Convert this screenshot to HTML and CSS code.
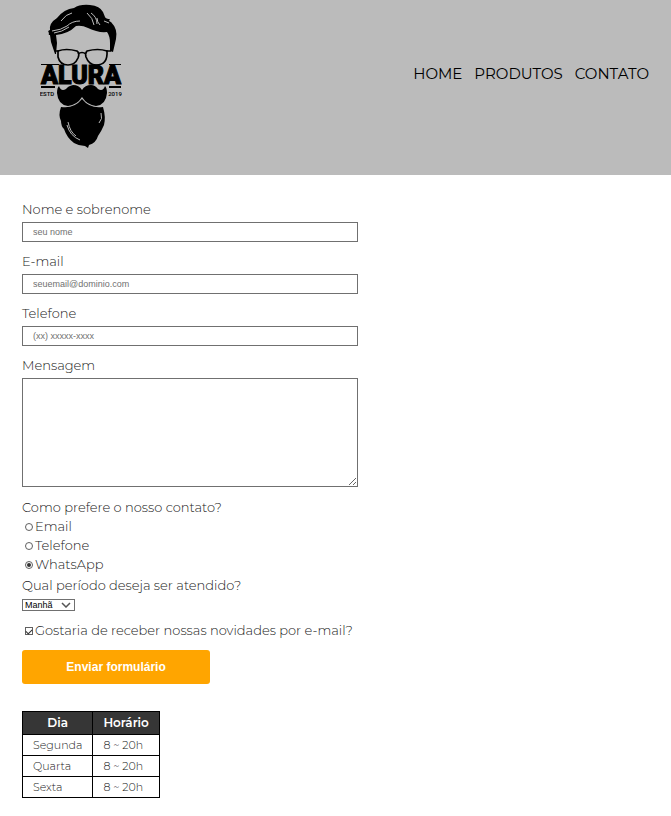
FILE: index.html
```html
<!DOCTYPE html>
<html lang="pt-br">
<head>
<meta charset="UTF-8">
<meta name="viewport" content="width=device-width, initial-scale=1">
<title>Contato - Barbearia Alura</title>
<link rel="stylesheet" href="styles.css">
</head>
<body>
<header class="header">
  <svg class="logo" viewBox="40 4 82 145" role="img" aria-label="Alura">
    <path d="M55 54L51 42L50 35Q48 35 49 33Q47 31 50 30Q49 23 57 18Q64 9 74 8Q80 4 90 5Q100 6 103 12L105 17Q106 19 110 19Q108 21 111 22Q118 29 116 39L113 52L110 51L110 43Q110 36 107 32Q98 33 88 28Q82 25 76 26Q68 34 56 35L57 43L56 54Z"/>
    <g class="shine">
      <path d="M52 31Q61 30 67 26Q72 21 80 21M54 33Q62 32 69 27M61 21Q66 14 72 13M87 13Q93 18 94 25M91 13Q97 17 97 24M97 18Q97 22 100 25M104 21L109 23"/>
    </g>
    <g class="frame">
      <path d="M58 51Q66 48 77 51Q80 53 78 58Q75 65 68 65Q60 65 58 57ZM87 51Q98 48 107 51Q108 65 96 65Q89 65 86 57Q85 53 87 51Z"/>
      <path d="M78 54Q82 51 86 54M56 51H59M106 51H111"/>
    </g>
    <path d="M41 64H59V65H41ZM109 64H121V65H109ZM41 86H55V88H41ZM109 86H121V88H109Z"/>
    <text class="brand" x="81" y="84">ALURA</text>
    <text class="small" x="47" y="96">ESTD</text>
    <text class="small" x="115" y="96">2019</text>
    <path d="M82 90Q79 85 73 85Q68 86 66 89Q61 92 59 86Q57 88 57 93Q58 105 68 106Q77 105 82 97Q87 105 96 106Q106 105 107 93Q107 88 105 86Q103 92 98 89Q95 85 91 85Q85 85 82 90Z"/>
    <path d="M61 107Q74 109 82 99Q90 109 103 107Q106 117 104 125Q101 132 98 136Q96 143 89 145L88 148L85 146Q79 146 74 143Q67 138 64 129Q61 126 61 121Q58 115 61 107Z"/>
    <g class="shine">
      <path d="M68 122Q70 132 76 136M67 125Q70 136 80 140M101 113Q103 119 99 123"/>
    </g>
  </svg>
  <nav class="nav">
    <a href="#">HOME</a>
    <a href="#">PRODUTOS</a>
    <a href="#">CONTATO</a>
  </nav>
</header>
<main class="main">
  <form class="form">
    <label class="label" for="nome">Nome e sobrenome</label>
    <input class="field" type="text" id="nome" placeholder="seu nome">
    <label class="label" for="email">E-mail</label>
    <input class="field" type="email" id="email" placeholder="seuemail@dominio.com">
    <label class="label" for="telefone">Telefone</label>
    <input class="field" type="tel" id="telefone" placeholder="(xx) xxxxx-xxxx">
    <label class="label" for="mensagem">Mensagem</label>
    <textarea class="field message" id="mensagem"></textarea>
    <fieldset class="group">
      <legend class="label">Como prefere o nosso contato?</legend>
      <label class="choice"><input type="radio" name="contato" value="email">Email</label>
      <label class="choice"><input type="radio" name="contato" value="telefone">Telefone</label>
      <label class="choice"><input type="radio" name="contato" value="whatsapp" checked>WhatsApp</label>
    </fieldset>
    <label class="label" for="periodo">Qual período deseja ser atendido?</label>
    <span class="period">
      <select id="periodo">
        <option>Manhã</option>
        <option>Tarde</option>
        <option>Noite</option>
      </select>
      <svg class="chevron" viewBox="0 0 10 6" aria-hidden="true"><path d="M1 1L5 5L9 1"/></svg>
    </span>
    <label class="choice news"><input type="checkbox" checked>Gostaria de receber nossas novidades por e-mail?</label>
    <button class="submit" type="submit">Enviar formulário</button>
  </form>
  <table class="hours">
    <thead>
      <tr><th>Dia</th><th>Horário</th></tr>
    </thead>
    <tbody>
      <tr><td>Segunda</td><td>8 ~ 20h</td></tr>
      <tr><td>Quarta</td><td>8 ~ 20h</td></tr>
      <tr><td>Sexta</td><td>8 ~ 20h</td></tr>
    </tbody>
  </table>
</main>
</body>
</html>
```
FILE: styles.css
```css
* {
  box-sizing: border-box;
}

body {
  margin: 0;
  background: #fff;
  color: #222;
  font-family: Montserrat, Inter, sans-serif;
  font-size: 13px;
  font-weight: 300;
  line-height: 20px;
}

.header {
  display: flex;
  justify-content: space-between;
  align-items: flex-start;
  padding: 4px 22px 26px 40px;
  background: #bbb;
}

.logo {
  display: block;
  width: 82px;
  height: 145px;
}

.shine path {
  fill: none;
  stroke: #bbb;
  stroke-width: 1;
}

.frame path {
  fill: none;
  stroke: #000;
  stroke-width: 1.7;
}

.brand {
  font: 900 25px Roboto, sans-serif;
  text-anchor: middle;
  stroke: #000;
  stroke-width: 1;
}

.small {
  font: 500 6px Roboto, sans-serif;
  text-anchor: middle;
}

.nav {
  display: flex;
  gap: 12px;
  padding-top: 60px;
  font-size: 15px;
  font-weight: 400;
}

.nav a {
  color: #000;
  text-decoration: none;
}

.main {
  padding: 24px 22px 18px;
}

.form {
  display: flex;
  flex-direction: column;
  align-items: flex-start;
}

.label {
  padding: 0;
  line-height: 20px;
}

.field {
  width: 50vw;
  height: 20px;
  margin: 3px 0 9px;
  padding: 0 10px;
  border: 1px solid #707070;
  border-radius: 0;
  background: #fff;
  font: 9px "Liberation Sans", Arial, sans-serif;
}

.field::placeholder {
  color: #707070;
}

.message {
  height: 109px;
  margin-bottom: 10px;
  resize: both;
}

.group {
  display: flex;
  flex-direction: column;
  margin: 0 0 1px;
  padding: 0;
  border: 0;
}

.choice {
  display: flex;
  align-items: center;
  line-height: 19px;
}

.choice input {
  display: grid;
  place-items: center;
  appearance: none;
  width: 8px;
  height: 8px;
  margin: 1px 2px 0 3px;
  border: 1px solid #606060;
  background: #fff;
}

.choice input[type="radio"] {
  border-radius: 50%;
}

.choice input[type="radio"]:checked::before {
  width: 4px;
  height: 4px;
  border-radius: 50%;
  background: #333;
  content: "";
}

.choice input[type="checkbox"]:checked::before {
  width: 5px;
  height: 3px;
  border: solid #333;
  border-width: 0 0 1px 1px;
  transform: rotate(-45deg);
  content: "";
}

.period {
  display: grid;
  align-items: center;
  margin: 4px 0 10px;
}

.period select {
  grid-area: 1 / 1;
  appearance: none;
  width: 53px;
  height: 12px;
  padding: 0 2px;
  border: 1px solid #707070;
  border-radius: 0;
  background: #fff;
  color: #000;
  font: 9px/10px "Liberation Sans", Arial, sans-serif;
}

.chevron {
  grid-area: 1 / 1;
  justify-self: end;
  width: 10px;
  height: 6px;
  margin-right: 4px;
  fill: none;
  stroke: #555;
  stroke-width: 1.5;
  pointer-events: none;
}

.submit {
  width: 30%;
  height: 34px;
  margin: 10px 0 27px;
  padding: 0;
  border: 0;
  border-radius: 3px;
  background: orange;
  color: #fff;
  font: bold 12px "Liberation Sans", Arial, sans-serif;
}

.hours {
  border-collapse: collapse;
  font-size: 11px;
  line-height: 16px;
}

.hours th,
.hours td {
  padding: 2px 10px;
  border: 1px solid #000;
}

.hours th {
  padding: 3px 10px;
  background: #363636;
  color: #fff;
  font-size: 12px;
  font-weight: 600;
}
```
